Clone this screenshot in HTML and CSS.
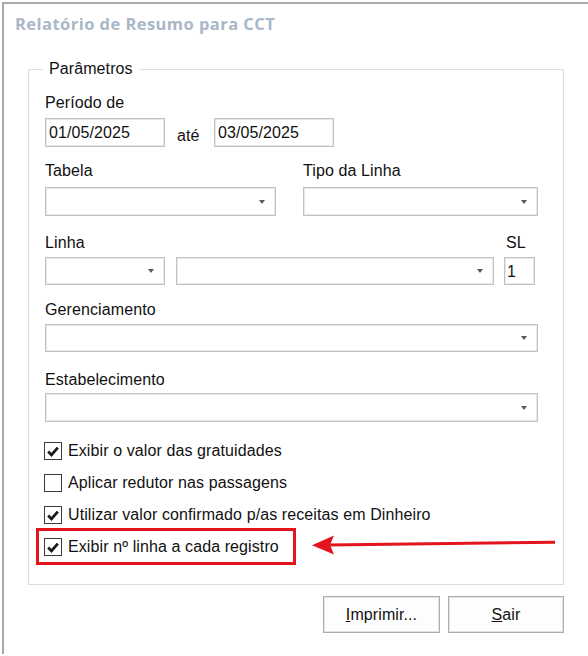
FILE: index.html
```html
<!DOCTYPE html>
<html lang="pt">
<head>
<meta charset="utf-8">
<title>Relatório de Resumo para CCT</title>
<link rel="stylesheet" href="styles.css">
</head>
<body>
<div class="window">
  <div class="title">Relatório de Resumo para CCT</div>
  <div class="group">
    <span class="legend">Parâmetros</span>

    <div class="label lbl-periodo">Período de</div>
    <div class="row dates">
      <div class="input date">01/05/2025</div>
      <span class="ate">até</span>
      <div class="input date">03/05/2025</div>
    </div>

    <div class="two-col lbl-tabela">
      <div class="label">Tabela</div>
      <div class="label">Tipo da Linha</div>
    </div>
    <div class="two-col combos-tabela">
      <div class="input combo"><span class="arrow"></span></div>
      <div class="input combo"><span class="arrow"></span></div>
    </div>

    <div class="row lbl-linha">
      <div class="label linha-lbl">Linha</div>
      <div class="label sl-lbl">SL</div>
    </div>
    <div class="row linha-row">
      <div class="input combo linha1"><span class="arrow"></span></div>
      <div class="input combo linha2"><span class="arrow"></span></div>
      <div class="input sl">1</div>
    </div>

    <div class="label lbl-ger">Gerenciamento</div>
    <div class="input combo full h28"><span class="arrow"></span></div>

    <div class="label lbl-estab">Estabelecimento</div>
    <div class="input combo full"><span class="arrow"></span></div>

    <div class="checks">
      <div class="check">
        <span class="box"><svg viewBox="0 0 17 17" width="17" height="17"><path d="M3.4 8.6 L6.9 12.1 L13.6 4.4" /></svg></span>
        <span>Exibir o valor das gratuidades</span>
      </div>
      <div class="check">
        <span class="box"></span>
        <span>Aplicar redutor nas passagens</span>
      </div>
      <div class="check">
        <span class="box"><svg viewBox="0 0 17 17" width="17" height="17"><path d="M3.4 8.6 L6.9 12.1 L13.6 4.4" /></svg></span>
        <span>Utilizar valor confirmado p/as receitas em Dinheiro</span>
      </div>
      <div class="check">
        <span class="box"><svg viewBox="0 0 17 17" width="17" height="17"><path d="M3.4 8.6 L6.9 12.1 L13.6 4.4" /></svg></span>
        <span>Exibir nº linha a cada registro</span>
      </div>
    </div>
  </div>

  <div class="buttons">
    <button class="btn"><u>I</u>mprimir...</button>
    <button class="btn"><u>S</u>air</button>
  </div>
</div>

<svg class="annot" width="588" height="656" viewBox="0 0 588 656">
  <rect x="37.5" y="529.5" width="257" height="34" fill="none" stroke="#e3141d" stroke-width="3"/>
  <line x1="555" y1="542.3" x2="328" y2="545" stroke="#e3141d" stroke-width="3"/>
  <polygon points="312,545.3 334,535.5 330,545 334,554.5" fill="#e3141d"/>
</svg>
</body>
</html>
```

FILE: styles.css
```css
html, body {
  margin: 0;
  padding: 0;
  background: #ffffff;
}

body {
  position: relative;
  width: 588px;
  height: 656px;
  overflow: hidden;
  font-family: "Liberation Sans", Arial, sans-serif;
  font-size: 16px;
  letter-spacing: 0.1px;
  color: #111111;
}

.window {
  margin: 2px 0 0 2px;
  border-top: 2px solid #a9a9a9;
  border-left: 2px solid #a9a9a9;
  height: 652px;
  box-sizing: border-box;
}

.title {
  margin: 10px 0 0 11px;
  height: 20px;
  line-height: 20px;
  font-family: "Open Sans", "Noto Sans", sans-serif;
  font-weight: 700;
  font-size: 16.5px;
  letter-spacing: 0.45px;
  color: #a9b7c7;
  white-space: nowrap;
}

.group {
  position: relative;
  margin: 35px 0 0 24px;
  width: 536px;
  height: 516px;
  box-sizing: border-box;
  border: 1px solid #dcdcdc;
  padding: 24px 24px 0 16px;
}

.legend {
  position: absolute;
  top: -10px;
  left: 14px;
  padding: 0 7px 0 6px;
  background: #ffffff;
  line-height: 18px;
}

.label {
  line-height: 18px;
  height: 18px;
  white-space: nowrap;
}

.row {
  display: flex;
  align-items: center;
}

.input {
  box-sizing: border-box;
  border: 1px solid #c2c2c2;
  box-shadow: inset 0 0 0 1px #e8e8e8;
  background: #ffffff;
  position: relative;
  height: 29px;
  line-height: 27px;
  padding-left: 3px;
  white-space: nowrap;
}

.dates {
  margin-top: 6px;
}

.date {
  width: 120px;
}

.ate {
  width: 26px;
  margin: 0 11px 0 12px;
  padding-top: 6px;
  line-height: 18px;
}

.two-col {
  display: grid;
  grid-template-columns: 231px 235px;
  column-gap: 27px;
}

.lbl-tabela {
  margin-top: 15px;
}

.combos-tabela {
  margin-top: 7px;
}

.arrow {
  position: absolute;
  right: 10px;
  top: 50%;
  margin-top: -2px;
  width: 0;
  height: 0;
  border-left: 3.5px solid transparent;
  border-right: 3.5px solid transparent;
  border-top: 4px solid #5a5a5a;
}

.lbl-linha {
  margin-top: 18px;
}

.linha-lbl {
  width: 461px;
}

.linha-row {
  margin-top: 5px;
}

.linha-row .input {
  height: 28px;
}

.linha1 {
  width: 120px;
  margin-right: 11px;
}

.linha2 {
  width: 318px;
  margin-right: 10px;
}

.sl {
  width: 31px;
  padding-left: 2px;
}

.lbl-ger {
  margin-top: 16px;
  margin-bottom: 5px;
}

.full {
  width: 493px;
}

.h28 {
  height: 28px;
}

.lbl-estab {
  margin-top: 19px;
  margin-bottom: 4px;
}

.checks {
  margin-top: 13px;
  margin-left: -1px;
}

.check {
  height: 32px;
  display: flex;
  align-items: center;
  white-space: nowrap;
}

.box {
  box-sizing: border-box;
  width: 18px;
  height: 18px;
  border: 1px solid #3c3c3c;
  margin-right: 6px;
  display: flex;
  align-items: center;
  justify-content: center;
  background: #ffffff;
}

.box svg {
  display: block;
}

.box path {
  fill: none;
  stroke: #1a1a1a;
  stroke-width: 3;
}

.buttons {
  display: flex;
  gap: 8px;
  margin: 11px 0 0 319px;
}

.btn {
  box-sizing: border-box;
  height: 37px;
  width: 117px;
  border: 1px solid #adadad;
  box-shadow: inset 0 0 0 1px #e2e2e2;
  background: #fdfdfd;
  font-family: "Liberation Sans", Arial, sans-serif;
  font-size: 16px;
  letter-spacing: 0.1px;
  color: #111111;
  padding: 0;
}

.btn + .btn {
  width: 116px;
}

.annot {
  position: absolute;
  left: 0;
  top: 0;
  pointer-events: none;
}
```
